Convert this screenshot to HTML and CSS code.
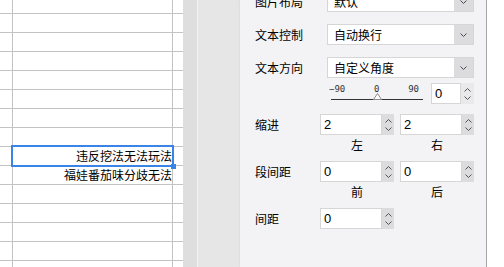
FILE: index.html
```html
<!DOCTYPE html>
<html lang="zh">
<head>
<meta charset="utf-8">
<link rel="stylesheet" href="styles.css">
</head>
<body>
<div class="app">
  <div class="sheet">
    <div class="c"></div><div class="c"></div><div class="c"></div>
    <div class="c"></div><div class="c"></div><div class="c"></div>
    <div class="c"></div><div class="c"></div><div class="c"></div>
    <div class="c"></div><div class="c"></div><div class="c"></div>
    <div class="c"></div><div class="c"></div><div class="c"></div>
    <div class="c"></div><div class="c"></div><div class="c"></div>
    <div class="c"></div><div class="c"></div><div class="c"></div>
    <div class="c"></div><div class="c"></div><div class="c"></div>
    <div class="c"></div><div class="c sel">违反挖法无法玩法</div><div class="c"></div>
    <div class="c"></div><div class="c">福娃番茄味分歧无法</div><div class="c"></div>
    <div class="c"></div><div class="c"></div><div class="c"></div>
    <div class="c"></div><div class="c"></div><div class="c"></div>
    <div class="c"></div><div class="c"></div><div class="c"></div>
    <div class="c"></div><div class="c"></div><div class="c"></div>
    <div class="c"></div><div class="c"></div><div class="c"></div>
  </div>
  <div class="strip-a"></div>
  <div class="strip-b"></div>
  <div class="panel">
    <div class="row dd-row first">
      <span class="lbl">图片布局</span>
      <div class="dd"><span class="dd-text">默认</span><span class="dd-btn"><svg width="7" height="4" viewBox="0 0 7 4"><polyline points="0.5,0.5 3.5,3.5 6.5,0.5" fill="none" stroke="#4a4a4a" stroke-width="1"/></svg></span></div>
    </div>
    <div class="row dd-row">
      <span class="lbl">文本控制</span>
      <div class="dd"><span class="dd-text">自动换行</span><span class="dd-btn"><svg width="7" height="4" viewBox="0 0 7 4"><polyline points="0.5,0.5 3.5,3.5 6.5,0.5" fill="none" stroke="#4a4a4a" stroke-width="1"/></svg></span></div>
    </div>
    <div class="row dd-row">
      <span class="lbl">文本方向</span>
      <div class="dd"><span class="dd-text">自定义角度</span><span class="dd-btn"><svg width="7" height="4" viewBox="0 0 7 4"><polyline points="0.5,0.5 3.5,3.5 6.5,0.5" fill="none" stroke="#4a4a4a" stroke-width="1"/></svg></span></div>
    </div>
    <div class="row slider-row">
      <div class="slider">
        <div class="ticks"><span>−90</span><span>0</span><span>90</span></div>
        <div class="track"></div>
        <svg class="thumb" width="9" height="7" viewBox="0 0 9 7"><polygon points="4.5,0.5 8.5,6.5 0.5,6.5" fill="#fff" stroke="#8a8a8a" stroke-width="1"/></svg>
      </div>
      <div class="spin small">
        <span class="spin-val">0</span>
        <span class="spin-btn plain">
          <svg width="7" height="4" viewBox="0 0 7 4"><polyline points="0.5,3.5 3.5,0.5 6.5,3.5" fill="none" stroke="#555" stroke-width="1"/></svg>
          <svg width="7" height="4" viewBox="0 0 7 4"><polyline points="0.5,0.5 3.5,3.5 6.5,0.5" fill="none" stroke="#555" stroke-width="1"/></svg>
        </span>
      </div>
    </div>
    <div class="group">
      <div class="row spin-row">
        <span class="lbl short">缩进</span>
        <div class="spin">
          <span class="spin-val">2</span>
          <span class="spin-btn">
            <svg width="7" height="4" viewBox="0 0 7 4"><polyline points="0.5,3.5 3.5,0.5 6.5,3.5" fill="none" stroke="#555" stroke-width="1"/></svg>
            <svg width="7" height="4" viewBox="0 0 7 4"><polyline points="0.5,0.5 3.5,3.5 6.5,0.5" fill="none" stroke="#555" stroke-width="1"/></svg>
          </span>
        </div>
        <div class="spin">
          <span class="spin-val">2</span>
          <span class="spin-btn">
            <svg width="7" height="4" viewBox="0 0 7 4"><polyline points="0.5,3.5 3.5,0.5 6.5,3.5" fill="none" stroke="#555" stroke-width="1"/></svg>
            <svg width="7" height="4" viewBox="0 0 7 4"><polyline points="0.5,0.5 3.5,3.5 6.5,0.5" fill="none" stroke="#555" stroke-width="1"/></svg>
          </span>
        </div>
      </div>
      <div class="subs"><span>左</span><span>右</span></div>
    </div>
    <div class="group">
      <div class="row spin-row">
        <span class="lbl short">段间距</span>
        <div class="spin">
          <span class="spin-val">0</span>
          <span class="spin-btn">
            <svg width="7" height="4" viewBox="0 0 7 4"><polyline points="0.5,3.5 3.5,0.5 6.5,3.5" fill="none" stroke="#555" stroke-width="1"/></svg>
            <svg width="7" height="4" viewBox="0 0 7 4"><polyline points="0.5,0.5 3.5,3.5 6.5,0.5" fill="none" stroke="#555" stroke-width="1"/></svg>
          </span>
        </div>
        <div class="spin">
          <span class="spin-val">0</span>
          <span class="spin-btn">
            <svg width="7" height="4" viewBox="0 0 7 4"><polyline points="0.5,3.5 3.5,0.5 6.5,3.5" fill="none" stroke="#555" stroke-width="1"/></svg>
            <svg width="7" height="4" viewBox="0 0 7 4"><polyline points="0.5,0.5 3.5,3.5 6.5,0.5" fill="none" stroke="#555" stroke-width="1"/></svg>
          </span>
        </div>
      </div>
      <div class="subs"><span>前</span><span>后</span></div>
    </div>
    <div class="row spin-row">
      <span class="lbl short">间距</span>
      <div class="spin">
        <span class="spin-val">0</span>
        <span class="spin-btn">
          <svg width="7" height="4" viewBox="0 0 7 4"><polyline points="0.5,3.5 3.5,0.5 6.5,3.5" fill="none" stroke="#555" stroke-width="1"/></svg>
          <svg width="7" height="4" viewBox="0 0 7 4"><polyline points="0.5,0.5 3.5,3.5 6.5,0.5" fill="none" stroke="#555" stroke-width="1"/></svg>
        </span>
      </div>
    </div>
  </div>
  <div class="edge"></div>
</div>
</body>
</html>
```

FILE: styles.css
```css
* { box-sizing: border-box; }
html, body { margin: 0; padding: 0; }
body {
  width: 504px;
  height: 267px;
  overflow: hidden;
  background: #fff;
  font-family: "Noto Sans CJK SC", "Liberation Sans", sans-serif;
  font-size: 12px;
  color: #000;
}
.app {
  display: flex;
  width: 504px;
  height: 267px;
}
.sheet {
  width: 183px;
  height: 267px;
  flex: none;
  overflow: hidden;
  display: grid;
  grid-template-columns: 12px 159px 10px;
  grid-template-rows: 13px;
  grid-auto-rows: 18px;
  gap: 1px;
  background: #c3c3c3;
  align-content: start;
}
.c {
  background: #fff;
  text-align: right;
  line-height: 18px;
  white-space: nowrap;
  font-size: 12px;
}
.sel {
  position: relative;
  z-index: 1;
  outline: 2px solid #3a84e8;
}
.sel::after {
  content: "";
  position: absolute;
  right: -4px;
  bottom: -4px;
  width: 5px;
  height: 5px;
  background: #3a84e8;
}
.strip-a {
  width: 15px;
  flex: none;
  background: #dedede;
  border-right: 1px solid #f2f2f2;
}
.strip-b {
  width: 42px;
  flex: none;
  background: #e6e6e6;
}
.panel {
  width: 247px;
  flex: none;
  background: #f3f3f5;
  border-right: 1px solid #a6a6a6;
  box-shadow: 1px 0 3px rgba(0, 0, 0, 0.18);
  padding-left: 15px;
  display: flex;
  flex-direction: column;
}
.edge {
  flex: 1;
  background: #fff;
}
.row {
  display: flex;
  align-items: center;
}
.dd-row {
  height: 21px;
  margin-bottom: 12px;
}
.dd-row.first {
  margin-top: -9px;
}
.lbl {
  width: 72px;
  flex: none;
  white-space: nowrap;
}
.lbl.short {
  width: 65px;
}
.dd {
  width: 147px;
  height: 21px;
  display: flex;
  background: #fff;
  border: 1px solid #d6d6d6;
}
.dd-text {
  flex: 1;
  padding-left: 6px;
  line-height: 19px;
}
.dd-btn {
  width: 19px;
  background: #dcdcdf;
  display: flex;
  align-items: center;
  justify-content: center;
}
.slider-row {
  height: 21px;
  margin-top: -7px;
  margin-left: 74px;
  gap: 8px;
  margin-bottom: 10px;
}
.slider {
  position: relative;
  width: 94px;
  height: 21px;
  display: flex;
  flex-direction: column;
}
.ticks {
  display: flex;
  justify-content: space-between;
  padding-right: 4px;
  font-family: "DejaVu Sans Mono", monospace;
  font-size: 9px;
  line-height: 9px;
  color: #333;
  margin-top: 2px;
  height: 12px;
}
.track {
  height: 1px;
  margin-left: 2px;
  background: #333;
  margin-top: 2px;
}
.thumb {
  position: absolute;
  left: 44px;
  top: 10px;
}
.spin {
  width: 74px;
  height: 21px;
  display: flex;
  margin-right: 6px;
}
.spin.small {
  width: 43px;
}
.spin-val {
  flex: 1;
  background: #fff;
  border: 1px solid #d6d6d6;
  padding-left: 3px;
  font-family: "Liberation Sans", sans-serif;
  font-size: 13px;
  line-height: 19px;
}
.spin-btn {
  width: 12px;
  background: #dcdcdf;
  display: flex;
  flex-direction: column;
  align-items: center;
  justify-content: center;
  gap: 4px;
}
.spin-btn.plain {
  width: 13px;
  background: #e9e9ec;
}
.spin-row {
  height: 21px;
}
.group {
  margin-bottom: 8px;
}
.subs {
  display: flex;
  margin-left: 65px;
  margin-top: 2px;
  height: 16px;
  line-height: 16px;
}
.subs span {
  width: 80px;
  text-align: center;
  padding-right: 6px;
}
```
